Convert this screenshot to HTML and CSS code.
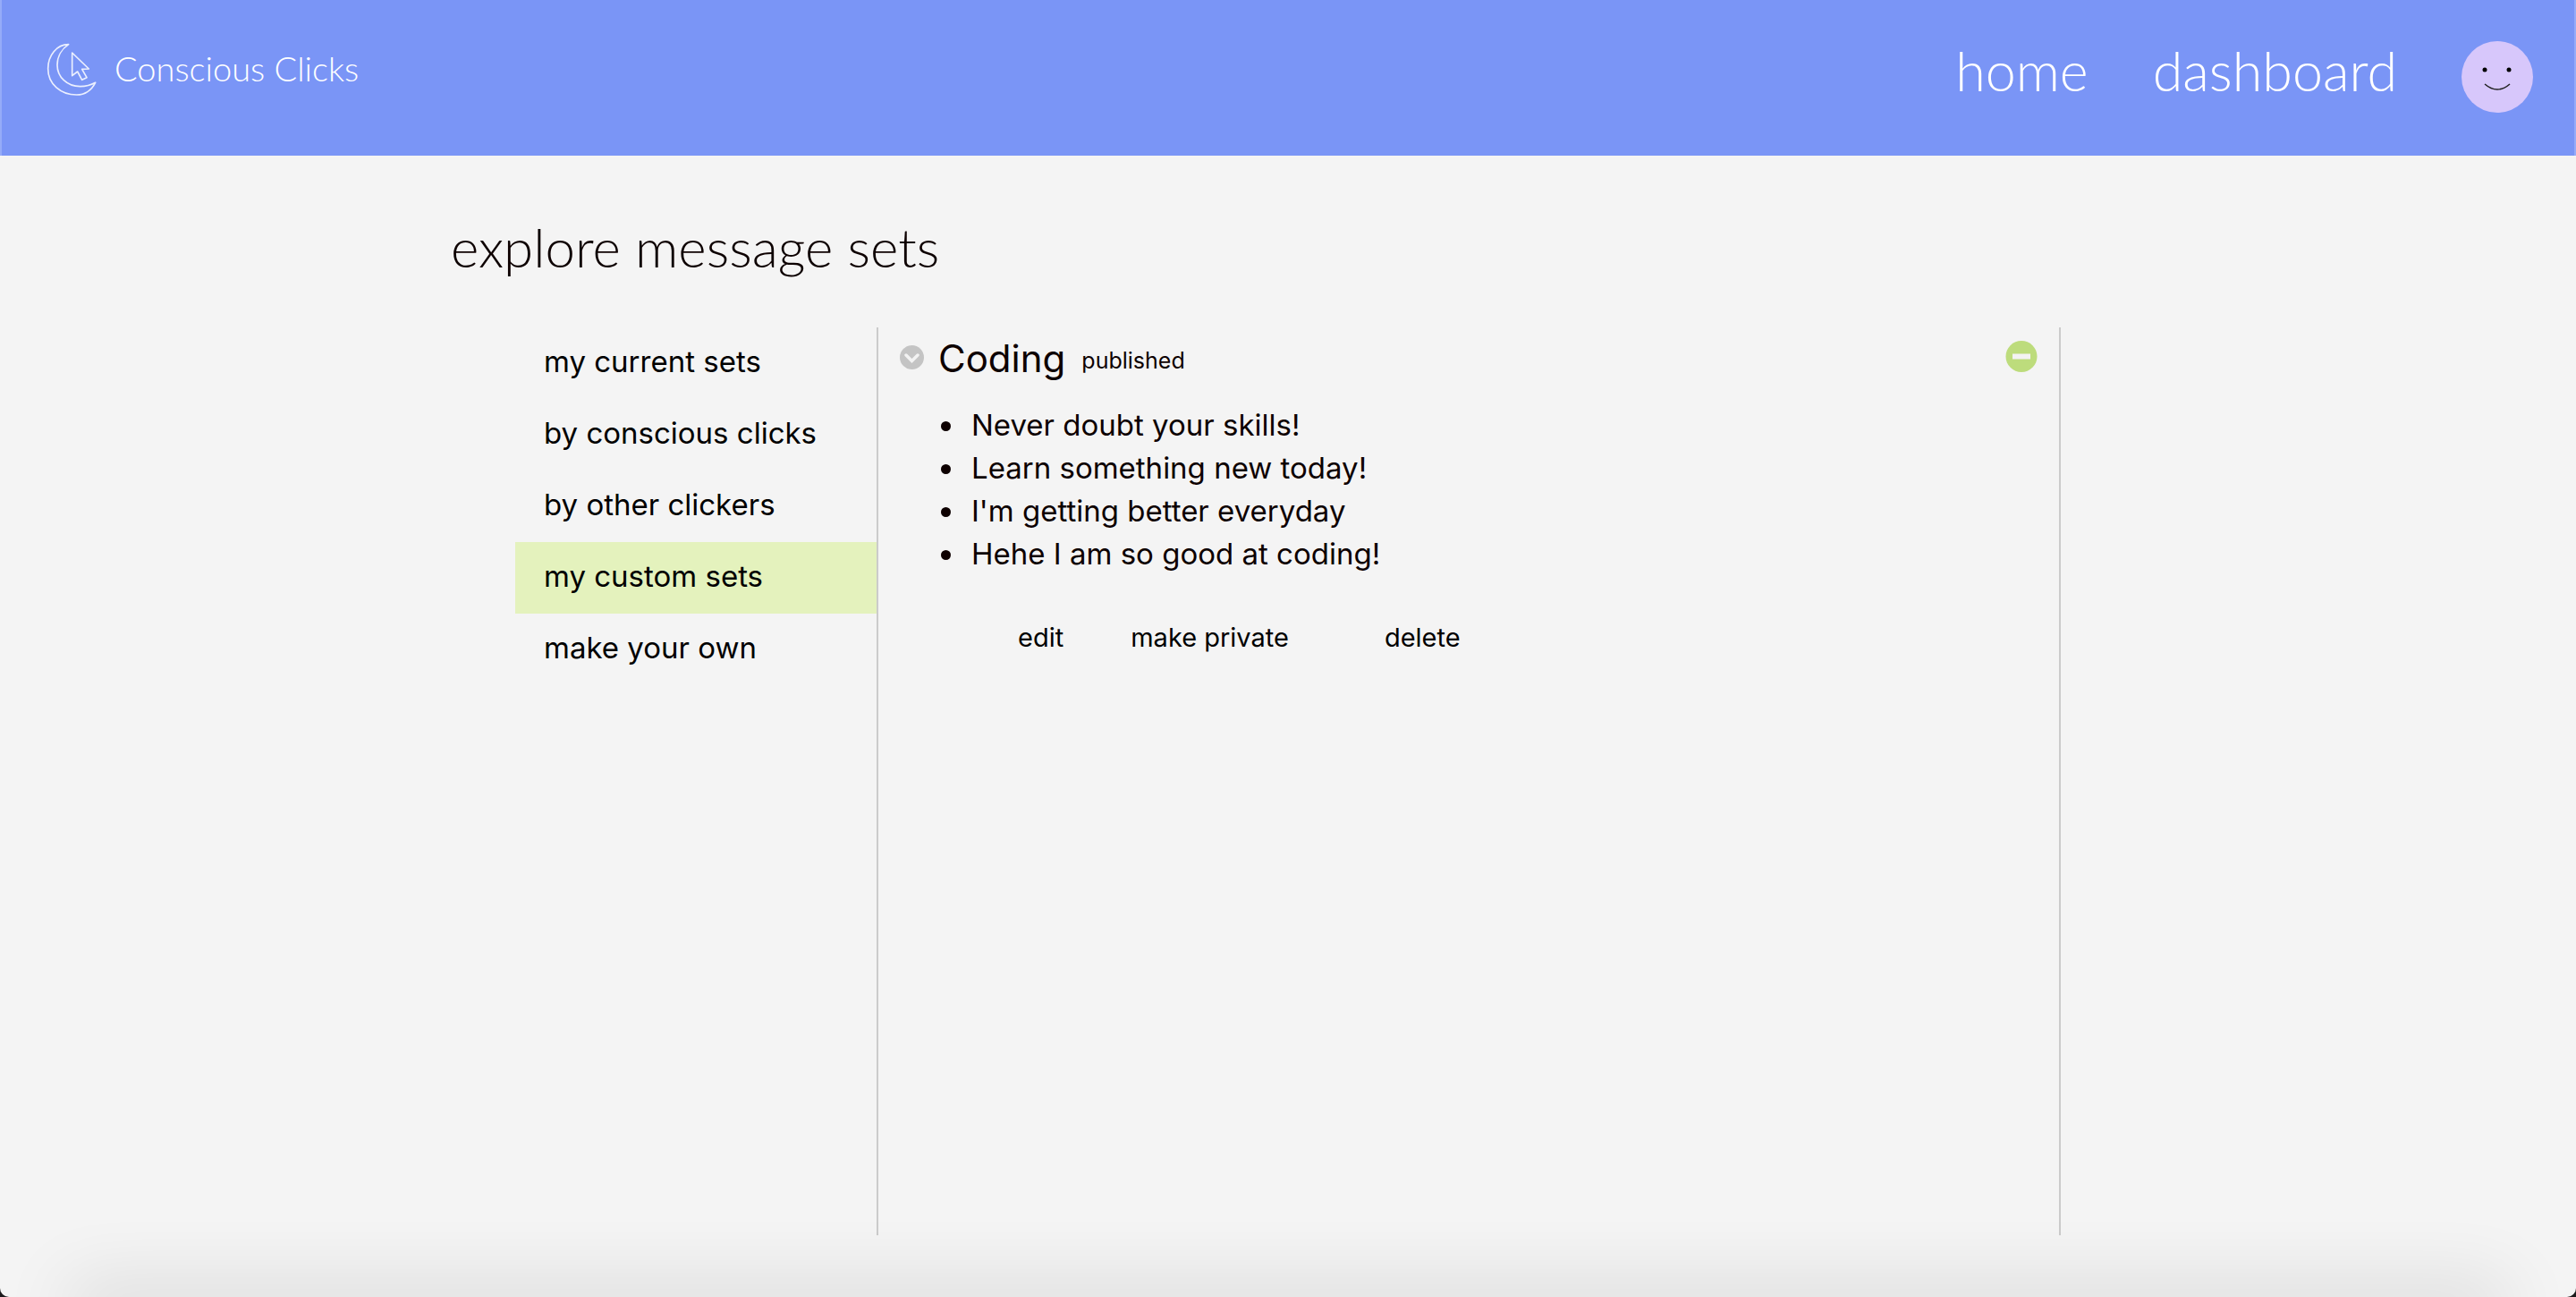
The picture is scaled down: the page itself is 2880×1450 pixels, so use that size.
FILE: index.html
```html
<!DOCTYPE html>
<html lang="en">
<head>
<meta charset="utf-8">
<meta name="viewport" content="width=device-width, initial-scale=1">
<title>Conscious Clicks</title>
<link rel="stylesheet" href="styles.css">
</head>
<body>
<div class="page">
  <header class="header">
    <a class="logo" href="#">
      <svg class="logo-icon" viewBox="36 30 168 180" fill="none" stroke="#fff" stroke-opacity=".85" stroke-width="5" stroke-linejoin="round" aria-hidden="true">
        <path d="M110 41C70 41 41 78 41 122C41 174 84 210 137 210C164 210 186 196 200 169C184 178 167 182 149 182C105 182 72 150 72 110C72 82 87 56 110 41Z"/>
        <path d="M122 69L178 123L155 124L171 152L155 160L140 132L122 146Z"/>
      </svg>
      <span>Conscious Clicks</span>
    </a>
    <nav class="nav">
      <a href="#">home</a>
      <a href="#">dashboard</a>
      <button class="avatar" type="button" aria-label="account">
        <svg viewBox="0 0 80 80" aria-hidden="true">
          <circle cx="40" cy="40" r="40" fill="#d7c7fb"/>
          <circle cx="26" cy="32" r="2.5"/>
          <circle cx="53" cy="32" r="2.5"/>
          <path d="M26 48Q40 60 54 48" fill="none" stroke="#222" stroke-width="1.5"/>
        </svg>
      </button>
    </nav>
  </header>
  <main class="main">
    <h1 class="title">explore message sets</h1>
    <div class="panel">
      <nav class="sidebar">
        <a href="#">my current sets</a>
        <a href="#">by conscious clicks</a>
        <a href="#">by other clickers</a>
        <a class="active" href="#" aria-current="page">my custom sets</a>
        <a href="#">make your own</a>
      </nav>
      <section class="content">
        <div class="set-head">
          <button class="icon-button" type="button" aria-label="collapse">
            <svg width="27" height="27" viewBox="0 0 27 27" aria-hidden="true">
              <circle cx="13.5" cy="13.5" r="13.5" fill="#c4c4c4"/>
              <path d="M7 11L13.500 17.500L20 11" fill="none" stroke="#f3f3f3" stroke-width="3.500" stroke-linecap="round"/>
            </svg>
          </button>
          <h2 class="set-name">Coding</h2>
          <span class="status">published</span>
          <button class="icon-button remove" type="button" aria-label="remove">
            <svg width="36" height="36" viewBox="0 0 36 36" aria-hidden="true">
              <circle cx="18" cy="17.500" r="17.500" fill="#bddc7c"/>
              <path d="M8 14.500h20v6H8z" fill="#f3f3f3"/>
            </svg>
          </button>
        </div>
        <ul class="messages">
          <li>Never doubt your skills!</li>
          <li>Learn something new today!</li>
          <li>I'm getting better everyday</li>
          <li>Hehe I am so good at coding!</li>
        </ul>
        <div class="actions">
          <button type="button">edit</button>
          <button type="button">make private</button>
          <button class="delete" type="button">delete</button>
        </div>
      </section>
    </div>
  </main>
  <div class="shade"></div>
</div>
</body>
</html>
```
FILE: styles.css
```css
* { box-sizing: border-box; }
html { background: #1c1a1c; }
body {
  margin: 0;
  color: #0d0000;
  font: 33px/48px Inter, "Liberation Sans", sans-serif;
}
a { color: inherit; text-decoration: none; }
button {
  margin: 0;
  padding: 0;
  border: 0;
  background: none;
  color: #000;
  font: inherit;
  cursor: pointer;
}
svg { display: block; }

.page {
  position: relative;
  display: flex;
  flex-direction: column;
  min-height: 100vh;
  overflow: hidden;
  background: #f4f4f4;
  border-radius: 0 0 10px 10px;
}

.header {
  display: flex;
  justify-content: space-between;
  align-items: flex-start;
  padding: 46px 48px 48px 52px;
  background: #7a95f6;
  box-shadow: inset 2px 0 #95abf8, inset -2px 0 #95abf8;
  color: #fff;
  font-family: Lato, sans-serif;
  font-weight: 300;
}
.logo {
  display: flex;
  gap: 20px;
  font-size: 38px;
  line-height: 60px;
}
.logo-icon { width: 56px; height: 60px; overflow: visible; }
.nav {
  display: flex;
  gap: 72px;
  font-size: 61px;
  line-height: 66px;
}
.avatar, .avatar svg { width: 80px; height: 80px; }

.main {
  flex: 1;
  display: flex;
  flex-direction: column;
  padding: 66px 20% 69px;
}
.title {
  margin: 0 0 54px -72px;
  font: 300 60px/72px Lato, sans-serif;
}
.panel {
  flex: 1;
  display: flex;
  border-right: 2px solid #cbcbcb;
}
.sidebar {
  display: flex;
  flex-direction: column;
  width: 406px;
  border-right: 2px solid #cbcbcb;
  color: #000;
}
.sidebar a { padding: 0 32px 4px; line-height: 76px; }
.sidebar .active {
  background: #e4f2bd;
}

.content { flex: 1; padding: 14px 24px; }
.set-head {
  display: flex;
  height: 42px;
  margin-bottom: 29px;
}
.icon-button {
  display: flex;
  align-items: center;
  height: 38px;
}
.remove { margin-left: auto; }
.set-name {
  margin: 0 18px 0 16px;
  font-size: 42px;
  font-weight: 400;
  line-height: 42px;
}
.status { font-size: 25px; line-height: 46px; }
.messages { margin: 0; padding: 0 0 0 74px; }
.messages li { padding-left: 6px; }
.actions {
  display: flex;
  gap: 75px;
  margin-top: 46px;
  padding-left: 132px;
  font-size: 29px;
}
.delete { margin-left: 32px; }

.shade {
  position: absolute;
  right: 90px;
  bottom: -20px;
  left: 90px;
  height: 20px;
  box-shadow: 0 0 80px 14px rgba(0, 0, 0, .12);
}
```
